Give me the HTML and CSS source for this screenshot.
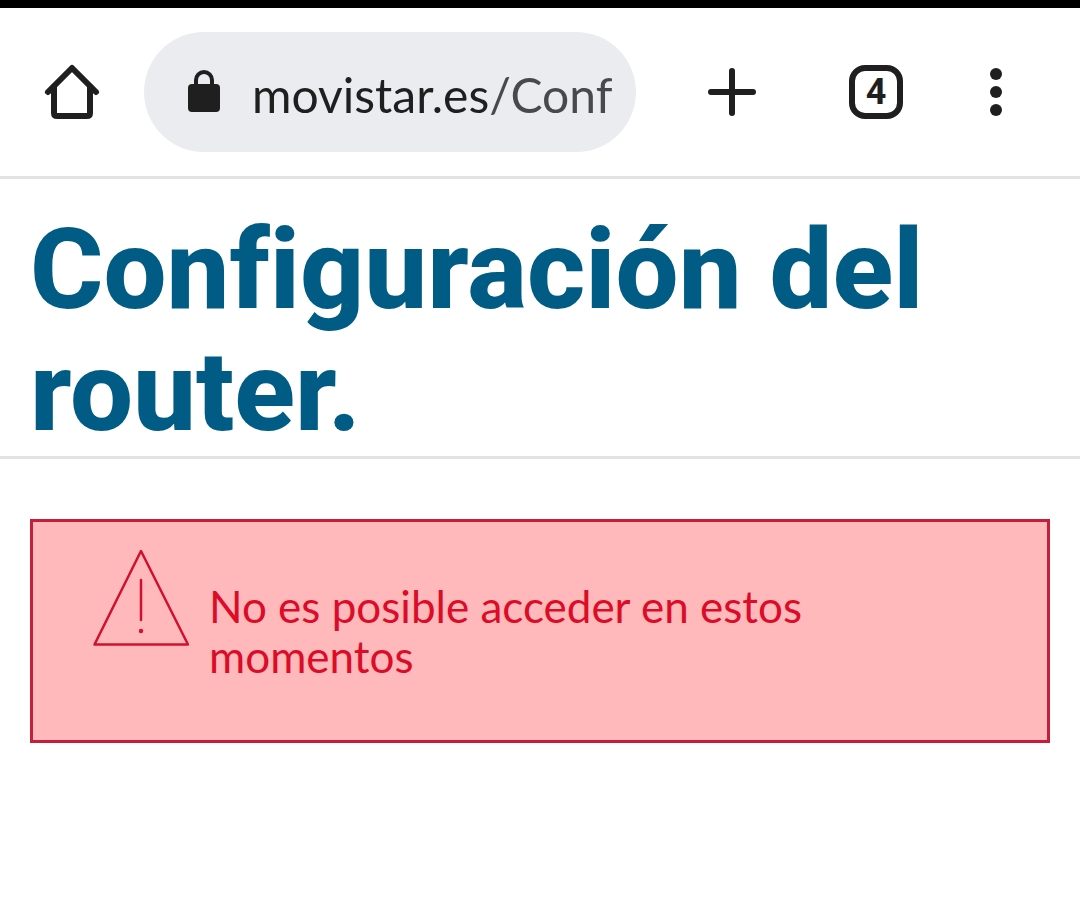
FILE: index.html
```html
<!DOCTYPE html>
<html lang="es">
<head>
  <meta charset="UTF-8" />
  <meta name="viewport" content="width=device-width, initial-scale=1.0" />
  <title>Configuración del router</title>
  <link rel="stylesheet" href="styles.css">
</head>
<body>
  <header class="toolbar">
    <button class="tool home" type="button" aria-label="Inicio">
      <svg width="60" height="60" viewBox="0 0 60 60" fill="none" stroke="currentColor" stroke-width="6" stroke-linecap="round" stroke-linejoin="round">
        <path d="M6 30 30 6l24 24" />
        <path d="M12 25v26q0 3 3 3h30q3 0 3-3V25" />
      </svg>
    </button>

    <label class="address">
      <svg width="32" height="44" viewBox="0 0 32 44" aria-hidden="true">
        <path d="M8 16V10a8 8 0 0 1 16 0v6" fill="none" stroke="currentColor" stroke-width="4" />
        <rect y="14" width="32" height="28" rx="4" fill="currentColor" />
      </svg>
      <input type="text" class="url" value="movistar.es/Conf" aria-label="Dirección" spellcheck="false" />
    </label>

    <button class="tool new-tab" type="button" aria-label="Nueva pestaña">
      <svg width="48" height="48" viewBox="0 0 48 48" stroke="currentColor" stroke-width="6" stroke-linecap="round">
        <path d="M24 3v42M3 24h42" />
      </svg>
    </button>
    <button class="tool tabs" type="button" aria-label="Pestañas abiertas"><span class="tab-count">4</span></button>
    <button class="tool menu" type="button" aria-label="Menú">
      <svg width="12" height="48" viewBox="0 0 12 48" fill="currentColor">
        <circle cx="6" cy="6" r="6" />
        <circle cx="6" cy="24" r="6" />
        <circle cx="6" cy="42" r="6" />
      </svg>
    </button>
  </header>

  <main>
    <h1>Configuración del router.</h1>

    <div class="alert" role="alert">
      <svg class="alert-icon" width="96" height="98" viewBox="0 0 96 98" fill="none" stroke="currentColor" stroke-width="2.500" stroke-linecap="round" stroke-linejoin="round" aria-hidden="true">
        <path d="M48 2 95 95.500H1.500Z" />
        <path d="M48 31v40" />
        <circle cx="48" cy="82" r="1" />
      </svg>
      <p>No es posible acceder en estos momentos</p>
    </div>
  </main>
</body>
</html>
```
FILE: styles.css
```css
* {
  box-sizing: border-box;
}
body {
  margin: 0;
  border-top: 8px solid #000;
  background-color: #fff;
  font-family: Lato, sans-serif;
}
.toolbar {
  display: flex;
  align-items: center;
  padding: 24px 12px 24px 0;
  border-bottom: 3px solid #e2e2e2;
  color: #1f1f1f;
}
.tool {
  display: flex;
  flex: none;
  align-items: center;
  justify-content: center;
  height: 96px;
  padding: 0;
  border: none;
  background: none;
  color: inherit;
  cursor: pointer;
}
.home, .menu {
  width: 144px;
}
.new-tab {
  width: 192px;
}
.tabs {
  width: 96px;
}
.address {
  display: flex;
  flex: 1;
  align-items: center;
  gap: 32px;
  min-width: 0;
  height: 120px;
  padding: 0 24px 0 44px;
  border-radius: 60px;
  background-color: #ebecf0;
}
.address svg {
  flex: none;
}
/* the path after the domain is a lighter grey */
.url {
  flex: 1;
  min-width: 0;
  padding: 4px 0 0;
  border: none;
  outline: none;
  background: linear-gradient(to right, #1f1f1f 238px, #48494b 238px);
  -webkit-background-clip: text;
  background-clip: text;
  color: transparent;
  font-family: Lato, sans-serif;
  font-size: 48px;
}
.tab-count {
  display: flex;
  align-items: center;
  justify-content: center;
  width: 54px;
  height: 54px;
  border: 6px solid currentColor;
  border-radius: 16px;
  font-family: Roboto, sans-serif;
  font-size: 36px;
  font-weight: 700;
}
h1 {
  margin: 0;
  padding: 30px 30px 3px;
  border-bottom: 3px solid #e2e2e2;
  color: #005c84;
  font-family: Roboto, sans-serif;
  font-size: 112px;
  font-variant-ligatures: none;
  font-weight: 800;
  line-height: 122px;
}
.alert {
  display: flex;
  align-items: flex-start;
  gap: 20px;
  margin: 60px 30px;
  padding: 27px 60px 59px;
  border: 3px solid #c41e3a;
  background-color: #ffb9ba;
  color: #d0102c;
}
.alert-icon {
  flex: none;
}
.alert p {
  flex: 1;
  margin: 0;
  padding-top: 32px;
  color: #dc0c28;
  font-size: 44px;
  line-height: 50px;
}
```
